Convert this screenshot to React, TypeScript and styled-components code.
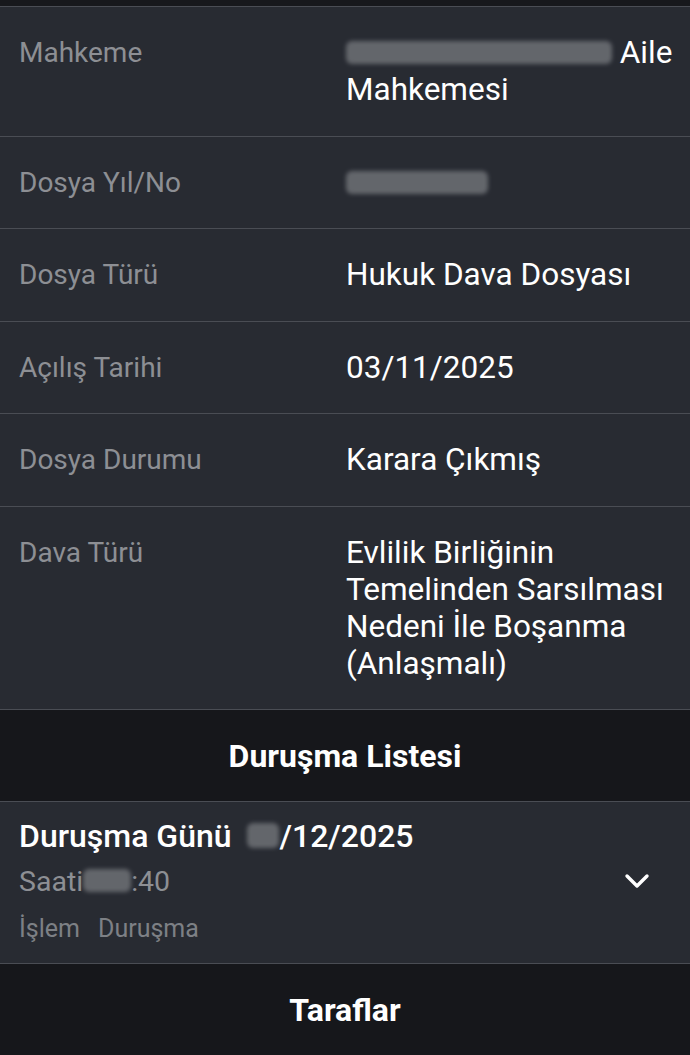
import React from 'react';
import styled, { createGlobalStyle } from 'styled-components';

const GlobalStyle = createGlobalStyle`
  html, body {
    margin: 0;
    padding: 0;
    background: #17181c;
  }
  body {
    font-family: Roboto, "Noto Sans", sans-serif;
    -webkit-font-smoothing: antialiased;
  }
`;

const Page = styled.div`
  width: 690px;
  min-height: 1055px;
  background: #17181c;
  display: flex;
  flex-direction: column;
  padding-top: 6px;
  box-sizing: border-box;
`;

const InfoRow = styled.div`
  display: grid;
  grid-template-columns: 327px 1fr;
  padding: 27.25px 8px 27.25px 19px;
  background: #282b32;
  border-top: 1px solid #4a4d54;
`;

const Label = styled.div`
  color: #8d8f94;
  font-size: 28px;
  line-height: 37px;
`;

const Value = styled.div`
  color: #ffffff;
  font-size: 31.5px;
  line-height: 37px;
  white-space: nowrap;
`;

// blurred blob over redacted text
const Redacted = styled.span<{ $w: number; $h?: number }>`
  display: inline-block;
  width: ${p => p.$w}px;
  height: ${p => p.$h ?? 23}px;
  vertical-align: -1px;
  background: #6a6d72;
  border-radius: 6px;
  filter: blur(2px);
  opacity: 0.9;
`;

const SectionHeader = styled.div`
  height: 91px;
  display: flex;
  align-items: center;
  justify-content: center;
  background: #16171b;
  border-top: 1px solid #4a4d54;
  color: #ffffff;
  font-size: 32px;
  font-weight: 700;
`;

const Hearing = styled.div`
  display: flex;
  align-items: center;
  background: #282b32;
  border-top: 1px solid #4a4d54;
  padding: 15px 40px 19px 19px;
`;

const HearingInfo = styled.div`
  flex: 1;
  display: flex;
  flex-direction: column;
`;

const HearingTitle = styled.div`
  color: #ffffff;
  font-size: 32px;
  font-weight: 500;
  line-height: 38px;
`;

const HearingTime = styled.div`
  color: #8d8f94;
  font-size: 28.5px;
  line-height: 38px;
  margin-top: 8px;
`;

const HearingKind = styled.div`
  color: #7d8085;
  font-size: 25px;
  line-height: 30px;
  margin-top: 13px;
  display: flex;
  gap: 18px;
`;

const Chevron = () => (
  <svg width="26" height="18" viewBox="0 0 26 18" fill="none">
    <path d="M3 4 L13 14 L23 4" stroke="#ffffff" strokeWidth="3.4" strokeLinecap="round" strokeLinejoin="round" />
  </svg>
);

const rows: { label: string; value: React.ReactNode }[] = [
  {
    label: 'Mahkeme',
    value: (
      <>
        <Redacted $w={266} /> Aile
        <br />
        Mahkemesi
      </>
    ),
  },
  { label: 'Dosya Yıl/No', value: <Redacted $w={142} /> },
  { label: 'Dosya Türü', value: 'Hukuk Dava Dosyası' },
  { label: 'Açılış Tarihi', value: '03/11/2025' },
  { label: 'Dosya Durumu', value: 'Karara Çıkmış' },
  {
    label: 'Dava Türü',
    value: (
      <>
        Evlilik Birliğinin
        <br />
        Temelinden Sarsılması
        <br />
        Nedeni İle Boşanma
        <br />
        (Anlaşmalı)
      </>
    ),
  },
];

export default function App() {
  return (
    <Page>
      <GlobalStyle />
      {rows.map(r => (
        <InfoRow key={r.label}>
          <Label>{r.label}</Label>
          <Value>{r.value}</Value>
        </InfoRow>
      ))}
      <SectionHeader>Duruşma Listesi</SectionHeader>
      <Hearing>
        <HearingInfo>
          <HearingTitle>
            Duruşma Günü&nbsp;&nbsp;<Redacted $w={32} $h={25} />/12/2025
          </HearingTitle>
          <HearingTime>
            Saati<Redacted $w={48} $h={23} />:40
          </HearingTime>
          <HearingKind>
            <span>İşlem</span>
            <span>Duruşma</span>
          </HearingKind>
        </HearingInfo>
        <Chevron />
      </Hearing>
      <SectionHeader>Taraflar</SectionHeader>
    </Page>
  );
}
